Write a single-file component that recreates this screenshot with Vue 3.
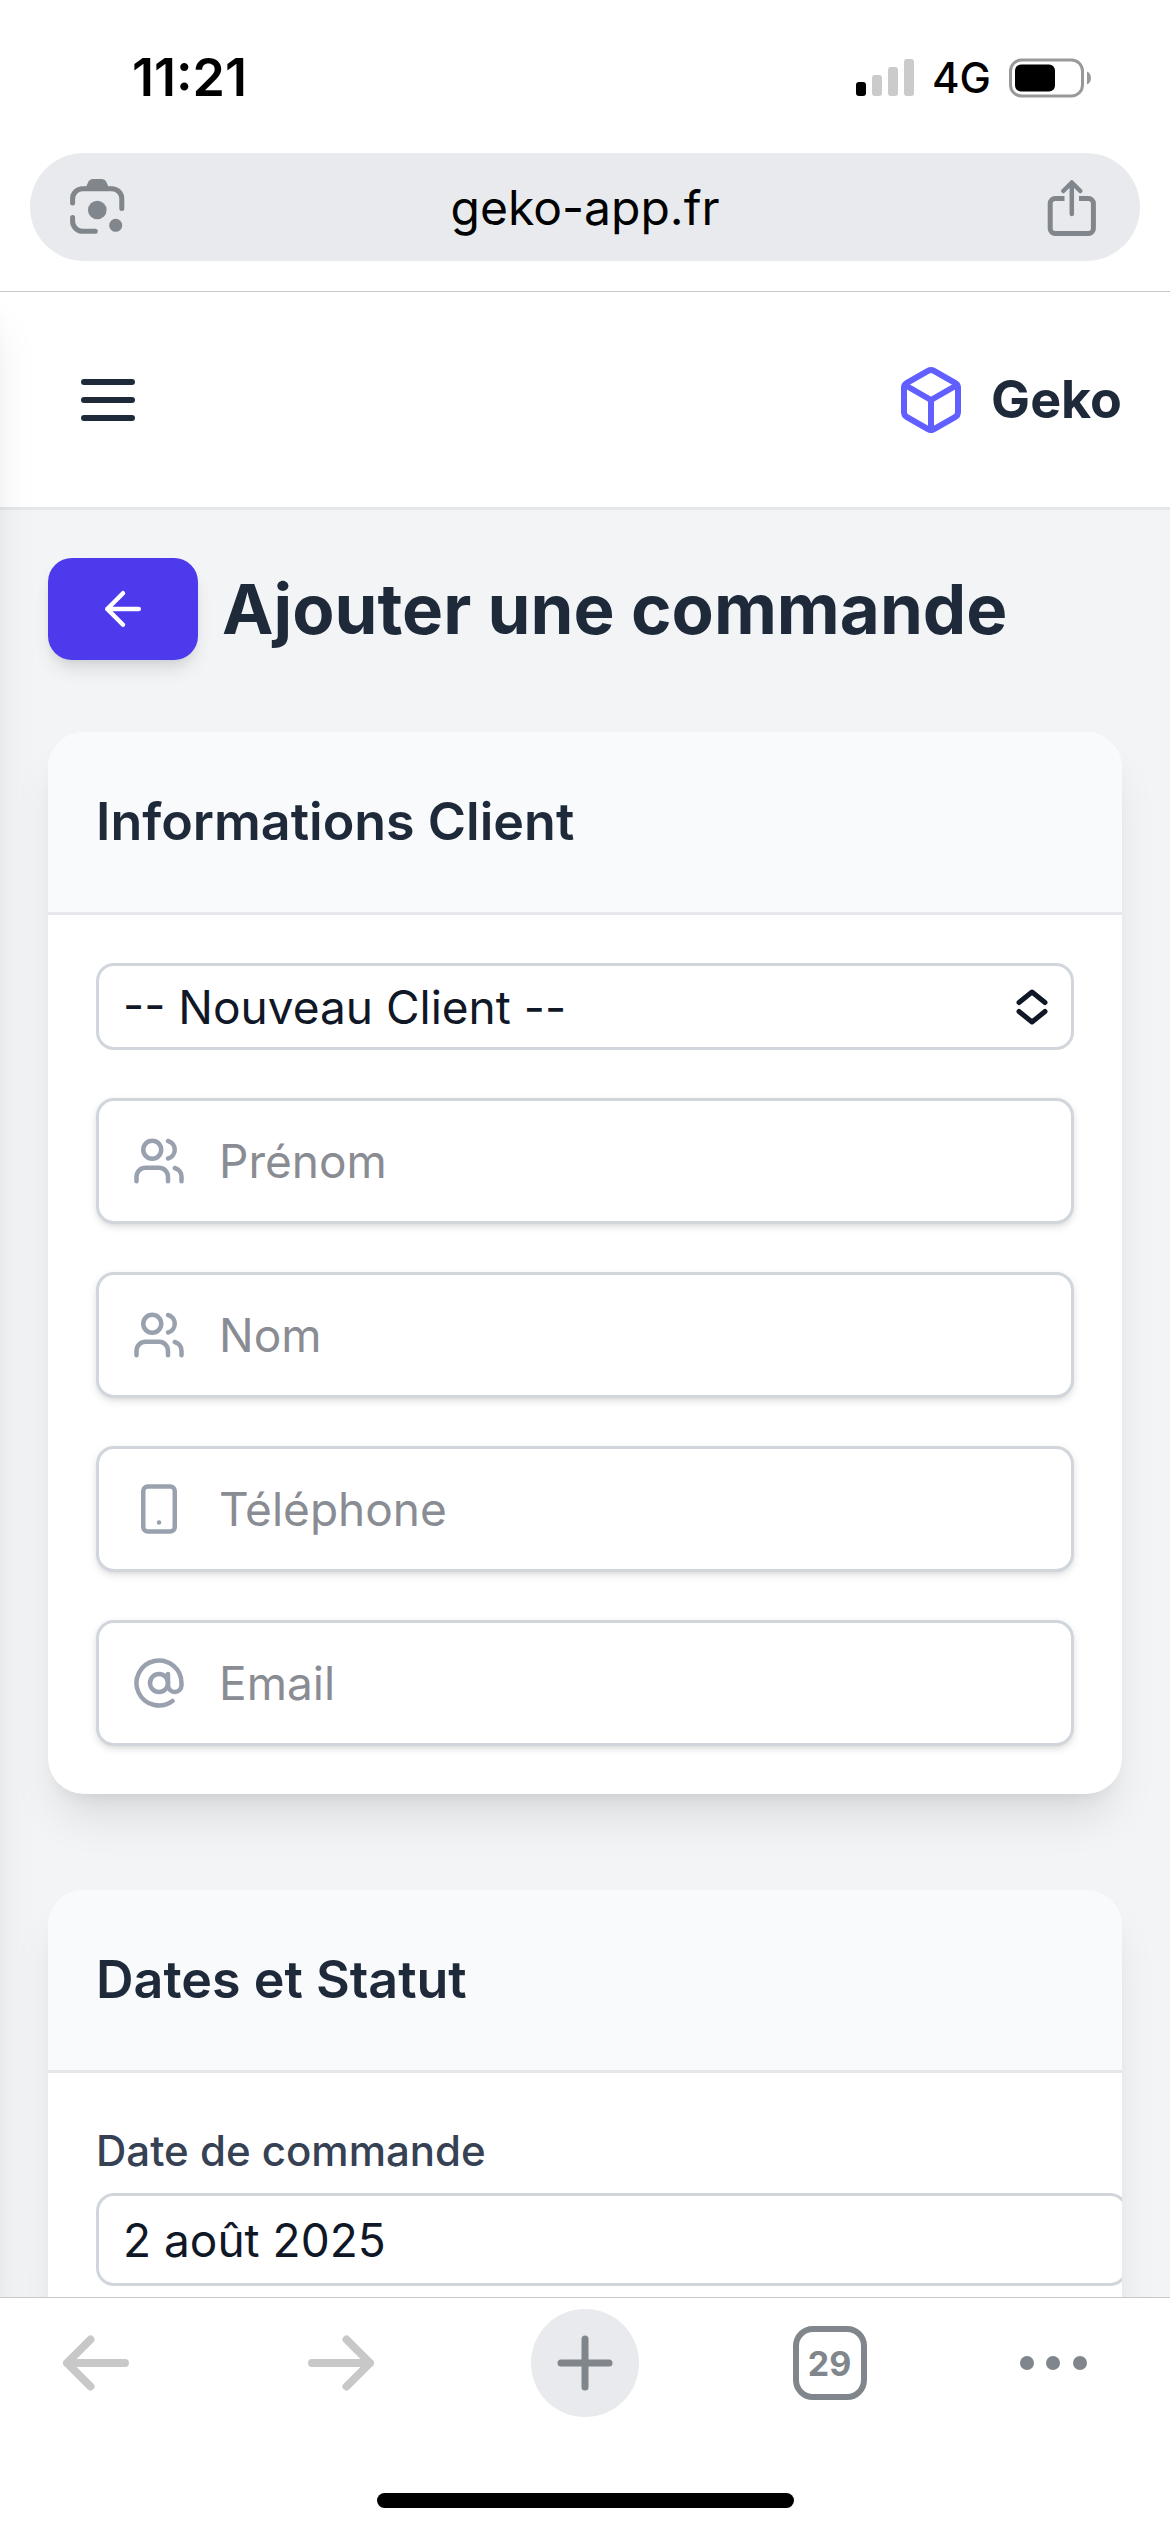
<script setup>
import { ref } from 'vue'

const url = ref('geko-app.fr')
const client = ref('')
const orderDate = ref('2 août 2025')

const fields = ref([
  { id: 'prenom', label: 'Prénom', type: 'text', icon: 'users', value: '' },
  { id: 'nom', label: 'Nom', type: 'text', icon: 'users', value: '' },
  { id: 'telephone', label: 'Téléphone', type: 'tel', icon: 'phone', value: '' },
  { id: 'email', label: 'Email', type: 'email', icon: 'at', value: '' },
])
</script>

<template>
  <div class="screen">
    <div class="status">
      <span class="time">11:21</span>
      <div class="status-icons">
        <svg class="signal" viewBox="0 0 58 38" aria-hidden="true">
          <rect x="0" y="23" width="10" height="14" rx="3" fill="#000" />
          <rect x="16" y="16" width="10" height="21" rx="3" fill="#cbcbcb" />
          <rect x="32" y="8" width="10" height="29" rx="3" fill="#cbcbcb" />
          <rect x="48" y="0" width="10" height="37" rx="3" fill="#cbcbcb" />
        </svg>
        <span class="network">4G</span>
        <svg class="battery" viewBox="0 0 83 40" aria-hidden="true">
          <rect x="1.5" y="2" width="72" height="36" rx="11" fill="none" stroke="#999" stroke-width="3" />
          <rect x="6" y="6.500" width="40" height="27" rx="6" fill="#000" />
          <path d="M78 13.500c5.300 2 5.300 11 0 13z" fill="#999" />
        </svg>
      </div>
    </div>

    <div class="address">
      <div class="pill">
        <button class="plain" type="button" aria-label="Google Lens">
          <svg class="pill-icon" viewBox="0 0 60 60" fill="none" stroke="#80868b" stroke-width="5" stroke-linecap="round">
            <path d="M4.600 26v-4.300a10 10 0 0 1 10-10h29.200a10 10 0 0 1 10 10v9.800M4.600 40.500v3.800a10 10 0 0 0 10 10h12.700" />
            <path d="M18 10l2.500-5.500Q21.800 2 24.500 2h9.600q2.700 0 4 2.500L40.600 10v3H18z" fill="#80868b" stroke="none" />
            <circle cx="29.300" cy="33" r="9.300" fill="#80868b" stroke="none" />
            <circle cx="47.700" cy="48.300" r="6.500" fill="#80868b" stroke="none" />
          </svg>
        </button>
        <input v-model="url" class="url" type="text" aria-label="Adresse" />
        <button class="plain" type="button" aria-label="Partager">
          <svg class="pill-icon" viewBox="0 0 60 60" fill="none" stroke="#80868b" stroke-width="5">
            <path d="M22.500 21.500h-9.300a5 5 0 0 0-5 5v25a5 5 0 0 0 5 5h33.200a5 5 0 0 0 5-5v-25a5 5 0 0 0-5-5H37" />
            <path d="M29.800 37V6M21.300 14l8.500-8.500 8.500 8.500" stroke-width="4.500" stroke-linecap="round" stroke-linejoin="round" />
          </svg>
        </button>
      </div>
    </div>

    <div class="page">
      <div class="drawer"></div>

      <header class="topbar">
        <button class="plain menu" type="button" aria-label="Menu">
          <svg viewBox="0 0 54 42">
            <path d="M3 3h48M3 21h48M3 39h48" stroke="#1e2939" stroke-width="6" stroke-linecap="round" />
          </svg>
        </button>
        <a class="brand" href="#">
          <svg viewBox="0 0 24 24" fill="none" stroke="#615fff" stroke-width="2" stroke-linecap="round" stroke-linejoin="round">
            <path d="M21 8a2 2 0 0 0-1-1.730l-7-4a2 2 0 0 0-2 0l-7 4A2 2 0 0 0 3 8v8a2 2 0 0 0 1 1.730l7 4a2 2 0 0 0 2 0l7-4A2 2 0 0 0 21 16Z" />
            <path d="M3.300 7 12 12l8.700-5M12 22V12" />
          </svg>
          <span>Geko</span>
        </a>
      </header>

      <main class="content">
        <div class="title-row">
          <button class="back" type="button" aria-label="Retour">
            <svg viewBox="0 0 24 24" fill="none" stroke="#fff" stroke-width="2" stroke-linecap="round" stroke-linejoin="round">
              <path d="m12 19-7-7 7-7M19 12H5" />
            </svg>
          </button>
          <h1>Ajouter une commande</h1>
        </div>

        <section class="card">
          <h2>Informations Client</h2>
          <div class="card-body fields">
            <div class="select-wrap">
              <select v-model="client" class="box" aria-label="Client">
                <option value="">-- Nouveau Client --</option>
              </select>
              <svg class="chevrons" viewBox="0 0 32 36" fill="none" stroke="#101828" stroke-width="5" stroke-linecap="round" stroke-linejoin="round">
                <path d="M3 13.500 16 3l13 10.500M3 22.500 16 33l13-10.500" />
              </svg>
            </div>

            <label v-for="field in fields" :key="field.id" class="field" :for="field.id">
              <svg viewBox="0 0 24 24" fill="none" stroke="#99a1af" stroke-width="2" stroke-linecap="round" stroke-linejoin="round">
                <template v-if="field.icon === 'users'">
                  <path d="M16 21v-2a4 4 0 0 0-4-4H6a4 4 0 0 0-4 4v2" />
                  <circle cx="9" cy="7" r="4" />
                  <path d="M22 21v-2a4 4 0 0 0-3-3.870M16 3.130a4 4 0 0 1 0 7.750" />
                </template>
                <template v-else-if="field.icon === 'phone'">
                  <rect x="5" y="2" width="14" height="20" rx="2" />
                  <path d="M12 18h.01" />
                </template>
                <template v-else>
                  <circle cx="12" cy="12" r="4" />
                  <path d="M16 8v5a3 3 0 0 0 6 0v-1a10 10 0 1 0-4 8" />
                </template>
              </svg>
              <input :id="field.id" v-model="field.value" :type="field.type" :placeholder="field.label" />
            </label>
          </div>
        </section>

        <section class="card">
          <h2>Dates et Statut</h2>
          <div class="card-body">
            <label class="caption" for="order-date">Date de commande</label>
            <input id="order-date" v-model="orderDate" class="box date" type="text" />
          </div>
        </section>
      </main>
    </div>

    <nav class="toolbar">
      <div class="tools">
        <button class="tool" type="button" aria-label="Précédent" disabled>
          <svg class="arrow" viewBox="0 0 68 56"><path d="M63 28H5M28.500 4.500 5 28l23.500 23.500" /></svg>
        </button>
        <button class="tool" type="button" aria-label="Suivant" disabled>
          <svg class="arrow" viewBox="0 0 68 56"><path d="M5 28h58M39.500 4.500 63 28 39.500 51.500" /></svg>
        </button>
        <button class="tool new-tab" type="button" aria-label="Nouvel onglet">
          <svg viewBox="0 0 56 56"><path d="M28 4v48M4 28h48" stroke="#80868b" stroke-width="7" stroke-linecap="round" /></svg>
        </button>
        <button class="tool" type="button" aria-label="29 onglets"><span class="tabs">29</span></button>
        <button class="tool more" type="button" aria-label="Plus">
          <svg viewBox="0 0 68 16" fill="#80868b">
            <circle cx="7" cy="8" r="7" /><circle cx="33" cy="8" r="7" /><circle cx="60" cy="8" r="7" />
          </svg>
        </button>
      </div>
      <div class="home"></div>
    </nav>
  </div>
</template>

<style>
body {
  margin: 0;
  background: #fff;
}
</style>

<style scoped>
* {
  box-sizing: border-box;
}

.screen {
  display: flex;
  flex-direction: column;
  height: 100vh;
  overflow: hidden;
  background: #fff;
  color: #1e2939;
  font-family: Inter, "Liberation Sans", sans-serif;
}

svg {
  display: block;
  flex: none;
}

button,
input,
select {
  font: inherit;
  color: inherit;
}

button {
  display: flex;
  align-items: center;
  justify-content: center;
  margin: 0;
  padding: 0;
  border: 0;
  background: none;
}

/* Status bar */
.status {
  display: flex;
  flex: none;
  align-items: center;
  justify-content: space-between;
  height: 153px;
  padding: 2px 78px 0 132px;
  color: #000;
}

.time {
  font-size: 52px;
  font-weight: 600;
}

.status-icons {
  display: flex;
  align-items: center;
  gap: 18px;
}

.signal {
  width: 58px;
  height: 38px;
}

.network {
  font-size: 42px;
  font-weight: 500;
}

.battery {
  width: 83px;
  height: 40px;
}

/* Address bar */
.address {
  flex: none;
  padding: 0 30px 30px;
  border-bottom: 1px solid #c6c8ca;
}

.pill {
  display: flex;
  align-items: center;
  height: 108px;
  padding: 0 38px;
  border-radius: 54px;
  background: #e8eaed;
}

.pill-icon {
  width: 60px;
  height: 60px;
}

.url {
  flex: 1;
  min-width: 0;
  padding: 0;
  border: 0;
  outline: 0;
  background: none;
  color: #000;
  font-size: 48px;
  text-align: center;
}

/* Web page */
.page {
  position: relative;
  flex: 1;
  min-height: 0;
  overflow: hidden;
  background: #f3f4f6;
}

.drawer {
  position: absolute;
  top: 0;
  right: 100%;
  bottom: 0;
  z-index: 1;
  width: 768px;
  box-shadow: 0 30px 45px -9px rgba(0, 0, 0, 0.1), 0 12px 18px -12px rgba(0, 0, 0, 0.1);
}

.topbar {
  display: flex;
  align-items: center;
  justify-content: space-between;
  height: 218px;
  padding: 0 48px 0 81px;
  border-bottom: 3px solid #e5e7eb;
  background: #fff;
}

.menu svg {
  width: 54px;
  height: 42px;
}

.brand {
  display: flex;
  align-items: center;
  gap: 24px;
  color: inherit;
  font-size: 52px;
  font-weight: 700;
  text-decoration: none;
}

.brand svg {
  width: 72px;
  height: 72px;
}

.content {
  padding: 48px;
}

.title-row {
  display: flex;
  align-items: center;
  gap: 24px;
  margin-bottom: 72px;
}

.back {
  flex: none;
  width: 150px;
  height: 102px;
  border-radius: 24px;
  background: #4c3aec;
  box-shadow: 0 12px 18px -3px rgba(0, 0, 0, 0.1), 0 6px 12px -6px rgba(0, 0, 0, 0.1);
}

.back svg {
  width: 54px;
  height: 54px;
}

h1 {
  margin: 0;
  font-size: 69px;
  font-weight: 700;
  line-height: 96px;
  white-space: nowrap;
}

.card {
  margin-bottom: 96px;
  overflow: hidden;
  border-radius: 36px;
  background: #fff;
  box-shadow: 0 30px 45px -9px rgba(0, 0, 0, 0.1), 0 12px 18px -12px rgba(0, 0, 0, 0.1);
}

h2 {
  margin: 0;
  padding: 48px;
  border-bottom: 3px solid #e5e7eb;
  background: #f9fafb;
  font-size: 52px;
  font-weight: 600;
  line-height: 84px;
}

.card-body {
  padding: 48px;
}

.fields {
  display: flex;
  flex-direction: column;
  gap: 48px;
}

.select-wrap {
  position: relative;
}

.box {
  display: block;
  width: 100%;
  height: 87px;
  margin: 0;
  padding: 0 24px;
  appearance: none;
  border: 3px solid #d1d5dc;
  border-radius: 18px;
  outline: 0;
  background: #fff;
  color: #101828;
  font-size: 46px;
}

.chevrons {
  position: absolute;
  top: 26px;
  right: 26px;
  width: 32px;
  height: 36px;
  pointer-events: none;
}

.field {
  display: flex;
  align-items: center;
  gap: 33px;
  height: 126px;
  padding: 0 33px;
  border: 3px solid #d1d5dc;
  border-radius: 18px;
  background: #fff;
  box-shadow: 0 3px 9px rgba(0, 0, 0, 0.1), 0 3px 6px -3px rgba(0, 0, 0, 0.1);
}

.field svg {
  width: 54px;
  height: 54px;
}

.field input {
  flex: 1;
  min-width: 0;
  padding: 0;
  border: 0;
  outline: 0;
  background: none;
  font-size: 46px;
}

.field input::placeholder {
  color: #8a8c93;
  opacity: 1;
}

.caption {
  display: block;
  margin-bottom: 12px;
  color: #364153;
  font-size: 42px;
  font-weight: 500;
  line-height: 60px;
}

.date {
  width: calc(100% + 54px);
  height: 93px;
}

/* Browser toolbar */
.toolbar {
  flex: none;
  height: 235px;
  padding: 11px 42px 24px;
  border-top: 1px solid #c6c8ca;
  background: #fff;
  display: flex;
  flex-direction: column;
  justify-content: space-between;
}

.tools {
  display: flex;
  justify-content: space-between;
}

.tool {
  width: 108px;
  height: 108px;
}

.arrow {
  width: 68px;
  height: 56px;
  fill: none;
  stroke: #c8c8c8;
  stroke-width: 8;
  stroke-linecap: round;
  stroke-linejoin: round;
}

.new-tab {
  border-radius: 50%;
  background: #e8eaed;
}

.new-tab svg {
  width: 56px;
  height: 56px;
}

.tabs {
  display: flex;
  align-items: center;
  justify-content: center;
  width: 74px;
  height: 74px;
  border: 6px solid #80868b;
  border-radius: 20px;
  color: #80868b;
  font-size: 34px;
  font-weight: 700;
}

.more {
  justify-content: flex-start;
}

.more svg {
  width: 68px;
  height: 16px;
}

.home {
  align-self: center;
  width: 417px;
  height: 15px;
  border-radius: 8px;
  background: #000;
}
</style>
